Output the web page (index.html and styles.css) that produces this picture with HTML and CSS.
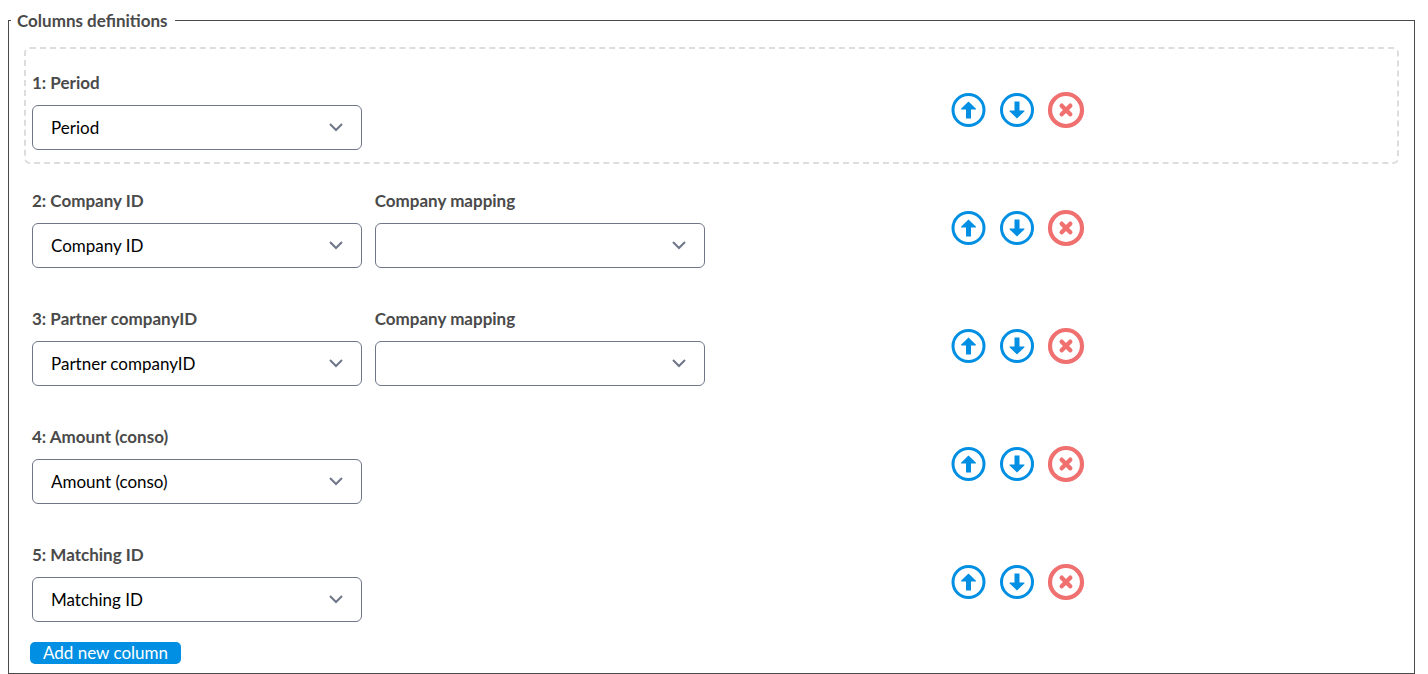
FILE: index.html
```html
<!DOCTYPE html>
<html lang="en">
<head>
  <meta charset="UTF-8" />
  <meta name="viewport" content="width=device-width, initial-scale=1.0" />
  <title>Columns definitions</title>
  <link rel="stylesheet" href="styles.css">
</head>
<body>
  <!-- Shared icons -->
  <svg class="sprite" aria-hidden="true">
    <symbol id="icon-up" viewBox="0 0 44 44">
      <circle cx="22.5" cy="22" r="15.5" fill="none" stroke="currentColor" stroke-width="3" />
      <path d="M22.5 13.5L30 20.8Q30.3 21.6 29.5 21.6H25V30.5H20V21.6H15.5Q14.7 21.6 15 20.8Z" fill="currentColor" />
    </symbol>
    <symbol id="icon-down" viewBox="0 0 44 44">
      <circle cx="22" cy="22" r="15.5" fill="none" stroke="currentColor" stroke-width="3" />
      <path d="M22 30.5L14.5 23.2Q14.2 22.4 15 22.4H19.5V13.5H24.5V22.4H29Q29.8 22.4 29.5 23.2Z" fill="currentColor" />
    </symbol>
    <symbol id="icon-remove" viewBox="0 0 44 44">
      <circle cx="22" cy="22" r="16" fill="none" stroke="currentColor" stroke-width="4.2" />
      <path d="M17.7 17.7L26.3 26.3M26.3 17.7L17.7 26.3" fill="none" stroke="currentColor" stroke-width="4.4" stroke-linecap="round" />
    </symbol>
  </svg>

  <fieldset class="columns">
    <legend class="columns-title">Columns definitions</legend>

    <div class="row row-active">
      <div class="field">
        <label for="column1">1: Period</label>
        <select id="column1"><option>Period</option></select>
      </div>
      <div class="actions">
        <button type="button" class="icon-button" aria-label="Move up"><svg><use href="#icon-up" /></svg></button>
        <button type="button" class="icon-button" aria-label="Move down"><svg><use href="#icon-down" /></svg></button>
        <button type="button" class="icon-button remove" aria-label="Remove"><svg><use href="#icon-remove" /></svg></button>
      </div>
    </div>

    <div class="row">
      <div class="field">
        <label for="column2">2: Company ID</label>
        <select id="column2"><option>Company ID</option></select>
      </div>
      <div class="field">
        <label for="mapping2">Company mapping</label>
        <select id="mapping2"><option></option></select>
      </div>
      <div class="actions">
        <button type="button" class="icon-button" aria-label="Move up"><svg><use href="#icon-up" /></svg></button>
        <button type="button" class="icon-button" aria-label="Move down"><svg><use href="#icon-down" /></svg></button>
        <button type="button" class="icon-button remove" aria-label="Remove"><svg><use href="#icon-remove" /></svg></button>
      </div>
    </div>

    <div class="row">
      <div class="field">
        <label for="column3">3: Partner companyID</label>
        <select id="column3"><option>Partner companyID</option></select>
      </div>
      <div class="field">
        <label for="mapping3">Company mapping</label>
        <select id="mapping3"><option></option></select>
      </div>
      <div class="actions">
        <button type="button" class="icon-button" aria-label="Move up"><svg><use href="#icon-up" /></svg></button>
        <button type="button" class="icon-button" aria-label="Move down"><svg><use href="#icon-down" /></svg></button>
        <button type="button" class="icon-button remove" aria-label="Remove"><svg><use href="#icon-remove" /></svg></button>
      </div>
    </div>

    <div class="row">
      <div class="field">
        <label for="column4">4: Amount (conso)</label>
        <select id="column4"><option>Amount (conso)</option></select>
      </div>
      <div class="actions">
        <button type="button" class="icon-button" aria-label="Move up"><svg><use href="#icon-up" /></svg></button>
        <button type="button" class="icon-button" aria-label="Move down"><svg><use href="#icon-down" /></svg></button>
        <button type="button" class="icon-button remove" aria-label="Remove"><svg><use href="#icon-remove" /></svg></button>
      </div>
    </div>

    <div class="row">
      <div class="field">
        <label for="column5">5: Matching ID</label>
        <select id="column5"><option>Matching ID</option></select>
      </div>
      <div class="actions">
        <button type="button" class="icon-button" aria-label="Move up"><svg><use href="#icon-up" /></svg></button>
        <button type="button" class="icon-button" aria-label="Move down"><svg><use href="#icon-down" /></svg></button>
        <button type="button" class="icon-button remove" aria-label="Remove"><svg><use href="#icon-remove" /></svg></button>
      </div>
    </div>

    <button type="button" class="add-button">Add new column</button>
  </fieldset>
</body>
</html>
```
FILE: styles.css
```css
* {
  box-sizing: border-box;
}
body {
  margin: 0;
  padding: 8px 13px 0 8px;
  background: #fff;
  color: #4a4a4a;
  font-family: Lato, sans-serif;
  font-size: 17px;
  line-height: 22px;
}
.sprite {
  display: none;
}
.columns {
  margin: 0;
  padding: 15px 15px 9px;
  border: 1px solid #4a4a4a;
}
.columns-title {
  margin-left: -13px;
  padding: 2px 7px 0 6px;
  font-weight: 700;
}
.row {
  display: grid;
  grid-template-columns: 3fr 3fr 2fr 4fr;
  margin-bottom: 1px;
  border: 2px dashed transparent;
  border-radius: 6px;
}
.row-active {
  border-color: #ddd;
}
.field {
  display: flex;
  flex-direction: column;
  gap: 11px;
  padding: 23px 7px 12px 6px;
}
.field label {
  font-weight: 700;
}
.field select {
  appearance: none;
  width: 100%;
  height: 45px;
  padding: 1px 40px 0 18px;
  border: 1px solid #6f7687;
  border-radius: 6px;
  background: #fff url("data:image/svg+xml,%3Csvg xmlns='http://www.w3.org/2000/svg' width='14' height='9'%3E%3Cpath d='M1 1l6 6 6-6' fill='none' stroke='%236f7687' stroke-width='2'/%3E%3C/svg%3E") no-repeat right 18px center;
  color: #000;
  font: inherit;
}
.actions {
  grid-column: 4;
  display: flex;
  gap: 5px;
  padding: 39px 6px 0;
}
.icon-button {
  width: 44px;
  height: 44px;
  padding: 0;
  border: 0;
  background: none;
  color: #008fe2;
  cursor: pointer;
}
.icon-button svg {
  display: block;
  width: 44px;
  height: 44px;
}
.remove {
  color: #f07070;
}
.add-button {
  display: block;
  margin: 6px 0 0 6px;
  padding: 0 13px;
  border: 0;
  border-radius: 5px;
  background: #008fe2;
  color: #fff;
  font: inherit;
  cursor: pointer;
}
```
